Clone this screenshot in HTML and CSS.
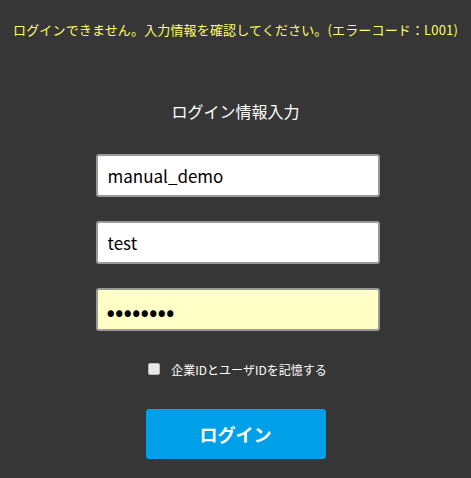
FILE: index.html
```html
<!DOCTYPE html>
<html lang="ja">
<head>
<meta charset="utf-8">
<title>ログイン</title>
<link rel="stylesheet" href="styles.css">
</head>
<body>
<div class="page">
  <p class="error">ログインできません。入力情報を確認してください。(エラーコード：L001)</p>
  <h1 class="title">ログイン情報入力</h1>
  <form class="form">
    <input class="field" type="text" value="manual_demo">
    <input class="field" type="text" value="test">
    <input class="field pw" type="password" value="password">
    <label class="remember"><span class="box"></span><span class="label-text">企業IDとユーザIDを記憶する</span></label>
    <button class="btn" type="button">ログイン</button>
  </form>
</div>
</body>
</html>
```
FILE: styles.css
```css
html, body {
  margin: 0;
  padding: 0;
  background: #363636;
}
body {
  font-family: "Noto Sans CJK JP", "Noto Sans", sans-serif;
  color: #fff;
}
.page {
  display: flex;
  flex-direction: column;
  align-items: center;
  padding-top: 20px;
}
.error {
  margin: 0;
  font-size: 13px;
  line-height: 20px;
  letter-spacing: 0.15px;
  color: #ffff66;
  white-space: nowrap;
}
.title {
  margin: 59px 0 0;
  font-size: 16px;
  font-weight: normal;
  line-height: 24px;
  color: #fff;
}
.form {
  margin-top: 31px;
  display: flex;
  flex-direction: column;
  align-items: center;
}
.field {
  box-sizing: border-box;
  width: 284px;
  height: 43px;
  margin: 0 0 24px 4px;
  padding: 0 10px;
  border: 2px solid #999;
  border-radius: 3px;
  background: #fff;
  font-family: "Noto Sans CJK JP", "Noto Sans", sans-serif;
  font-size: 17px;
  color: #000;
  outline: none;
}
.field.pw {
  background: #ffffc6;
  margin-bottom: 28px;
  font-size: 25px;
  padding-left: 9px;
}
.remember {
  display: flex;
  align-items: center;
  height: 20px;
  font-size: 12px;
  color: #fff;
  margin-left: 4px;
}
.box {
  box-sizing: border-box;
  width: 12px;
  height: 12px;
  border: 1px solid #bbb;
  border-radius: 2px;
  background: #e8e8e8;
  margin-right: 11px;
}
.btn {
  margin-top: 30px;
  width: 180px;
  height: 50px;
  border: none;
  border-radius: 3px;
  background: #00a0e9;
  color: #fff;
  font-family: "Noto Sans CJK JP", "Noto Sans", sans-serif;
  font-size: 18px;
  font-weight: bold;
}
```
